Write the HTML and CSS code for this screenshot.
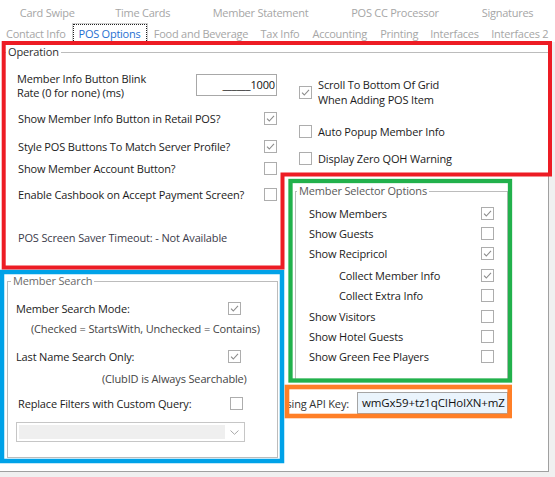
FILE: index.html
```html
<!DOCTYPE html>
<html>
<head>
<meta charset="utf-8">
<link rel="stylesheet" href="styles.css">
</head>
<body>
<div class="app">
  <div class="tabs">
    <div class="tabrow row1">
      <div class="tab">Card Swipe</div>
      <div class="tab">Time Cards</div>
      <div class="tab">Member Statement</div>
      <div class="tab">POS CC Processor</div>
      <div class="tab">Signatures</div>
    </div>
    <div class="tabrow row2">
      <div class="tab">Contact Info</div>
      <div class="tab sel"><span class="focus">POS Options</span></div>
      <div class="tab">Food and Beverage</div>
      <div class="tab">Tax Info</div>
      <div class="tab">Accounting</div>
      <div class="tab">Printing</div>
      <div class="tab">Interfaces</div>
      <div class="tab">Interfaces 2</div>
    </div>
  </div>

  <div class="panel">
    <div class="group op">
      <div class="gtitle op-title">Operation</div>
      <div class="op-body">
        <div class="op-left">
          <div class="blink-row">
            <div class="blink-label">Member Info Button Blink<br>Rate (0 for none) (ms)</div>
            <div class="numbox">______1000</div>
          </div>
          <div class="row lrow r-show"><span>Show Member Info Button in Retail POS?</span><span class="cb"><svg viewBox="0 0 11 11" width="11" height="11"><path d="M2 5.6 4.3 8 9 2.8" fill="none" stroke="#8c8c8c" stroke-width="1.1"/></svg></span></div>
          <div class="row lrow r-style"><span>Style POS Buttons To Match Server Profile?</span><span class="cb"><svg viewBox="0 0 11 11" width="11" height="11"><path d="M2 5.6 4.3 8 9 2.8" fill="none" stroke="#8c8c8c" stroke-width="1.1"/></svg></span></div>
          <div class="row lrow r-acct"><span>Show Member Account Button?</span><span class="cb"></span></div>
          <div class="row lrow r-cash"><span>Enable Cashbook on Accept Payment Screen?</span><span class="cb"></span></div>
          <div class="row lrow r-saver"><span class="saver">POS Screen Saver Timeout: - Not Available</span></div>
        </div>
        <div class="op-right">
          <div class="crow r-scroll"><span class="cb"><svg viewBox="0 0 11 11" width="11" height="11"><path d="M2 5.6 4.3 8 9 2.8" fill="none" stroke="#8c8c8c" stroke-width="1.1"/></svg></span><span class="two">Scroll To Bottom Of Grid<br>When Adding POS Item</span></div>
          <div class="crow r-auto"><span class="cb"></span><span>Auto Popup Member Info</span></div>
          <div class="crow r-zero"><span class="cb"></span><span>Display Zero QOH Warning</span></div>
        </div>
      </div>
    </div>

    <div class="group sel-group">
      <div class="gtitle sel-title">Member Selector Options</div>
      <div class="row srow s-first"><span>Show Members</span><span class="cb"><svg viewBox="0 0 11 11" width="11" height="11"><path d="M2 5.6 4.3 8 9 2.8" fill="none" stroke="#8c8c8c" stroke-width="1.1"/></svg></span></div>
      <div class="row srow"><span>Show Guests</span><span class="cb"></span></div>
      <div class="row srow"><span>Show Recipricol</span><span class="cb"><svg viewBox="0 0 11 11" width="11" height="11"><path d="M2 5.6 4.3 8 9 2.8" fill="none" stroke="#8c8c8c" stroke-width="1.1"/></svg></span></div>
      <div class="row srow indent s-gap2"><span>Collect Member Info</span><span class="cb"><svg viewBox="0 0 11 11" width="11" height="11"><path d="M2 5.6 4.3 8 9 2.8" fill="none" stroke="#8c8c8c" stroke-width="1.1"/></svg></span></div>
      <div class="row srow indent"><span>Collect Extra Info</span><span class="cb"></span></div>
      <div class="row srow s-gap1"><span>Show Visitors</span><span class="cb"></span></div>
      <div class="row srow"><span>Show Hotel Guests</span><span class="cb"></span></div>
      <div class="row srow"><span>Show Green Fee Players</span><span class="cb"></span></div>
    </div>

    <div class="group search">
      <div class="gtitle search-title">Member Search</div>
      <div class="row m-mode"><span>Member Search Mode:</span><span class="cb"><svg viewBox="0 0 11 11" width="11" height="11"><path d="M2 5.6 4.3 8 9 2.8" fill="none" stroke="#8c8c8c" stroke-width="1.1"/></svg></span></div>
      <div class="row note note1"><span>(Checked = StartsWith, Unchecked = Contains)</span></div>
      <div class="row m-last"><span>Last Name Search Only:</span><span class="cb"><svg viewBox="0 0 11 11" width="11" height="11"><path d="M2 5.6 4.3 8 9 2.8" fill="none" stroke="#8c8c8c" stroke-width="1.1"/></svg></span></div>
      <div class="row note note2"><span>(ClubID is Always Searchable)</span></div>
      <div class="row m-replace"><span>Replace Filters with Custom Query:</span><span class="cb"></span></div>
      <div class="combo"><span class="combo-fill"></span><span class="combo-btn"><svg viewBox="0 0 9 5" width="9" height="5"><path d="M0.5 0.5 4.5 4.3 8.5 0.5" fill="none" stroke="#a8a8a8" stroke-width="1"/></svg></span></div>
    </div>

    <div class="api">
      <div class="api-label"><span>Using API Key:</span></div>
      <div class="api-box">wmGx59+tz1qCIHoIXN+mZ</div>
    </div>
  </div>

  <svg class="marks" viewBox="0 0 555 477" width="555" height="477">
    <rect x="2" y="272" width="280" height="189" fill="none" stroke="#00a2e8" stroke-width="4.5"/>
    <polygon points="3.7,43 550,43 550,174.5 282.5,174.5 282.5,267.5 3.7,267.5" fill="none" stroke="#ed1c24" stroke-width="4"/>
    <rect x="290.5" y="181" width="219.5" height="199.5" fill="none" stroke="#22b14c" stroke-width="4.3"/>
    <rect x="287" y="387" width="222.7" height="29" fill="none" stroke="#ff7f27" stroke-width="4.6"/>
  </svg>
</div>
</body>
</html>
```

FILE: styles.css
```css
* { box-sizing: border-box; }
html, body { margin: 0; padding: 0; }
body {
  width: 555px;
  height: 477px;
  overflow: hidden;
  background: #f0f0f0;
  font-family: "Open Sans", "Noto Sans", sans-serif;
  font-size: 11px;
  letter-spacing: -0.15px;
  color: #1b1b1b;
}
.app {
  position: relative;
  width: 555px;
  height: 477px;
}

/* tabs */
.tabs {
  height: 42px;
  padding-top: 3px;
  background: #fff;
}
.tabrow { display: grid; height: 20px; }
.row1 { grid-template-columns: 94.5px 96.5px 139px 130px 95px; }
.row2 { grid-template-columns: 71.5px 76px 107px 51px 68.5px 50.5px 60px 70.5px; height: 19px; }
.tab {
  display: flex;
  align-items: center;
  justify-content: center;
  color: #a6a6a6;
  white-space: nowrap;
  line-height: 16px;
  letter-spacing: -0.25px;
}
.row2 .tab { padding-top: 1px; }
.tab.sel {
  border: 1px solid #cfcfcf;
  border-bottom: none;
  background: #fff;
  color: #1f6fd1;
  padding: 0;
}
.focus {
  display: flex;
  align-items: center;
  justify-content: center;
  width: 100%;
  height: 100%;
  border: 1px dotted #222;
  padding-top: 1px;
}

/* panel */
.panel {
  display: grid;
  width: 549px;
  height: 430px;
  background: #fff;
  border-right: 1px solid #a0a0a0;
  border-bottom: 1px solid #a0a0a0;
  grid-template-columns: 287px 261px;
  grid-template-rows: 138px 88px 118px 34px 51px;
}

.group { border: 1px solid #bcbcbc; }
.gtitle {
  width: max-content;
  line-height: 16px;
  height: 16px;
  margin-top: -9px;
  padding: 0 2px;
  background: #fff;
}

.row {
  display: flex;
  justify-content: space-between;
  align-items: center;
  height: 20px;
  white-space: nowrap;
}
.cb {
  display: block;
  flex: none;
  width: 13px;
  height: 13px;
  border: 1px solid #adadad;
  background: #fff;
}
.cb svg { display: block; }

/* operation */
.op {
  grid-area: 1 / 1 / 3 / 3;
  margin: 10px 0 0 4px;
  border-width: 1px 0 0 1px;
  padding-left: 11px;
}
.op-title { margin-left: -10px; color: #2e2e2e; }
.op-body { display: flex; }
.op-left { width: 261px; flex: none; }
.op-right { margin-left: 22px; }

.blink-row {
  display: flex;
  justify-content: space-between;
  align-items: flex-start;
  margin-top: 12px;
}
.blink-label { line-height: 14px; padding-left: 1px; }
.numbox {
  margin-top: 2px;
  width: 81px;
  height: 22px;
  border: 1px solid #a8a8a8;
  text-align: right;
  line-height: 20px;
  padding-right: 1px;
  color: #111;
}
.lrow { padding-left: 2px; }
.r-show { margin-top: 8px; }
.r-style { margin-top: 8px; }
.r-acct { margin-top: 2px; }
.r-cash { margin-top: 6px; }
.r-saver { margin-top: 23px; }
.saver { color: #3b3b4a; }

.crow {
  display: flex;
  align-items: center;
  gap: 6px;
  white-space: nowrap;
  height: 20px;
}
.crow .two { line-height: 15px; }
.r-scroll { margin-top: 17px; height: 30px; }
.r-auto { margin-top: 14px; }
.r-zero { margin-top: 7px; }

/* member selector */
.sel-group {
  grid-area: 2 / 2 / 4 / 3;
  margin: 11px 40px 5px 8px;
  padding: 0 13px;
}
.sel-title { margin-left: -12px; color: #5a5a5a; }
.s-first { margin-top: 4px; }
.indent { padding-left: 30px; }
.s-gap2 { margin-top: 2px; }
.s-gap1 { margin-top: 1px; }

/* member search */
.search {
  grid-area: 3 / 1 / 6 / 2;
  margin: 13px 9px 13px 7px;
  padding: 0 36px 0 8px;
}
.search-title { margin-left: -5px; color: #6a6a6a; }
.m-mode { margin-top: 9px; }
.note { color: #444; }
.note1 { padding-left: 15px; }
.m-last { margin-top: 8px; }
.note2 { margin-top: 2px; padding-left: 86px; }
.m-replace { margin-top: 5px; padding-left: 2px; margin-right: -2px; }
.combo {
  display: flex;
  margin-top: 9px;
  width: 229px;
  height: 20px;
  border: 1px solid #c6c6c6;
  padding: 2px 0 2px 2px;
}
.combo-fill { flex: 1; background: #efefef; }
.combo-btn {
  width: 19px;
  display: flex;
  align-items: center;
  justify-content: center;
}
.combo-btn svg { display: block; }

/* api key */
.api {
  grid-area: 4 / 2 / 5 / 3;
  margin: 0 40px 0 2px;
  display: flex;
  align-items: center;
}
.api-label {
  flex: 1;
  min-width: 0;
  overflow: hidden;
  display: flex;
  justify-content: flex-end;
  white-space: nowrap;
  padding-right: 8px;
  color: #333;
}
.api-label span { flex: none; }
.api-box {
  flex: none;
  width: 151px;
  height: 22px;
  border: 1px solid #a5a5a5;
  background: #eaf4fc;
  padding-left: 4px;
  line-height: 20px;
  font-size: 11.5px;
  letter-spacing: -0.1px;
  color: #111;
  white-space: nowrap;
  overflow: hidden;
}

/* annotation overlay */
.marks {
  position: absolute;
  left: 0;
  top: 0;
  pointer-events: none;
}
```
